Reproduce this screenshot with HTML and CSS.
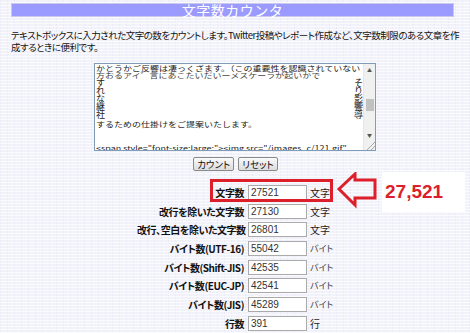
FILE: index.html
```html
<!DOCTYPE html>
<html lang="ja">
<head>
<meta charset="utf-8">
<title>文字数カウンタ</title>
<link rel="stylesheet" href="styles.css">
</head>
<body>
<div class="page">
  <div class="wrap">
    <h1 class="title">文字数カウンタ</h1>
    <p class="desc">テキストボックスに入力された文字の数をカウントします。Twitter投稿やレポート作成など、文字数制限のある文章を作<br>成するときに便利です。</p>
  </div>

  <div class="ta">
    <div class="ta-text">
      <div class="ta-line">かとうかご反響は凄っくざます。（この重要性を認識されていない</div>
      <div class="ta-line l2">方おるアイ゛言にあこたいだいーメスケーラが起いかで</div>
      <div class="ta-cols">
        <div class="vcol">すれな継社</div>
        <div class="vcol">そり影響導</div>
      </div>
      <div class="ta-line">するための仕掛けをご提案いたします。</div>
      <div class="ta-line last">&lt;span style="font-size:large;"&gt;&lt;img src="/images_c/121.gif"</div>
    </div>
    <div class="ta-scroll">
      <div class="sb-arrow">▲</div>
      <div class="sb-track"><div class="sb-thumb"></div></div>
      <div class="sb-arrow">▼</div>
      <div class="sb-grip"></div>
    </div>
  </div>

  <div class="buttons">
    <button class="btn">カウント</button>
    <button class="btn">リセット</button>
  </div>

  <div class="result">
    <div class="grid">
      <div class="lbl">文字数</div><div class="val">27521</div><div class="unit">文字</div>
      <div class="lbl">改行を除いた文字数</div><div class="val">27130</div><div class="unit">文字</div>
      <div class="lbl">改行、空白を除いた文字数</div><div class="val">26801</div><div class="unit">文字</div>
      <div class="lbl">バイト数(UTF-16)</div><div class="val">55042</div><div class="unit small">バイト</div>
      <div class="lbl">バイト数(Shift-JIS)</div><div class="val">42535</div><div class="unit small">バイト</div>
      <div class="lbl">バイト数(EUC-JP)</div><div class="val">42541</div><div class="unit small">バイト</div>
      <div class="lbl">バイト数(JIS)</div><div class="val">45289</div><div class="unit small">バイト</div>
      <div class="lbl">行数</div><div class="val">391</div><div class="unit">行</div>
    </div>
  </div>

  <div class="mark-box"></div>
  <svg class="mark-arrow" width="44" height="40" viewBox="0 0 44 40">
    <polygon points="3,17 19,2 19,8 39,8 39,26 19,26 19,33" fill="none" stroke="#dc1f2b" stroke-width="3" stroke-linejoin="miter"/>
  </svg>
  <div class="callout">27,521</div>
</div>
</body>
</html>
```

FILE: styles.css
```css
html, body {
  margin: 0;
  padding: 0;
}
body {
  width: 470px;
  height: 333px;
  overflow: hidden;
  background-color: #f2f2fb;
  background-image:
    repeating-linear-gradient(0deg, rgba(255,255,255,0.7) 0 1px, transparent 1px 3px),
    repeating-linear-gradient(90deg, rgba(230,230,245,0.5) 0 1px, transparent 1px 7px);
  font-family: "Noto Sans CJK JP", "Liberation Sans", sans-serif;
  color: #111;
}
.page {
  position: relative;
  padding-top: 3px;
}
.wrap {
  width: 443px;
  margin-left: 11px;
}
.title {
  margin: 0;
  height: 14px;
  background: #9a9aff;
  border: 1px solid #c9c9ee;
  box-sizing: border-box;
  color: #fff;
  font-size: 14px;
  font-weight: normal;
  line-height: 13px;
  text-align: center;
  letter-spacing: 0.5px;
}
.desc {
  margin: 12px 0 0 0;
  font-size: 9.5px;
  line-height: 12px;
  font-feature-settings: "palt";
  letter-spacing: -0.5px;
  color: #111;
  white-space: nowrap;
}
.ta {
  width: 282px;
  height: 88px;
  margin: 10px auto 0;
  box-sizing: border-box;
  border: 1px solid #7f9db9;
  background: #fff;
  display: flex;
}
.ta-text {
  flex: 1;
  overflow: hidden;
  padding: 1px 0 0 1px;
  font-family: "Noto Sans CJK JP", "DejaVu Sans Mono", monospace;
  font-size: 9px;
  color: #222;
}
.ta-line {
  white-space: nowrap;
  line-height: 7px;
  height: 7px;
  transform: scaleY(0.8);
  transform-origin: left top;
}
.l2 {
  color: #444;
}
.ta-cols {
  display: flex;
  justify-content: space-between;
  height: 42px;
  padding-right: 0;
}
.vcol {
  width: 9px;
  word-break: break-all;
  line-height: 8px;
  font-size: 9px;
}
.last {
  margin-top: 17px;
}
.ta-scroll {
  width: 11px;
  background: #f0f0f0;
  display: flex;
  flex-direction: column;
  border-left: 1px solid #e6e6e6;
}
.sb-arrow {
  height: 11px;
  font-size: 5px;
  line-height: 11px;
  text-align: center;
  color: #555;
}
.sb-track {
  flex: 1;
  padding-top: 24px;
}
.sb-thumb {
  width: 8px;
  height: 12px;
  margin: 0 auto;
  background: #c1c1c1;
}
.sb-grip {
  height: 10px;
  background: linear-gradient(135deg, transparent 60%, #aaa 60% 66%, transparent 66% 78%, #aaa 78% 84%, transparent 84%);
}
.buttons {
  display: flex;
  justify-content: center;
  gap: 4px;
  margin-top: 6px;
  padding-left: 1px;
}
.btn {
  height: 14px;
  padding: 0 3px;
  font-family: "Noto Sans CJK JP", sans-serif;
  font-size: 9.5px;
  line-height: 12px;
  color: #111;
  background: linear-gradient(#fafafa, #dcdcdc);
  border: 1px solid #8a8a8a;
  border-radius: 2px;
  font-feature-settings: "palt";
}
.result {
  padding-left: 137px;
  margin-top: 14px;
}
.grid {
  display: grid;
  grid-template-columns: 108px 59px 24px;
  grid-auto-rows: 15px;
  column-gap: 3px;
  row-gap: 3.7px;
  align-items: center;
}
.lbl {
  text-align: right;
  font-size: 10px;
  font-weight: bold;
  line-height: 15px;
  font-feature-settings: "palt";
  letter-spacing: -0.45px;
  white-space: nowrap;
  color: #111;
  padding-right: 1px;
}
.val {
  height: 15px;
  box-sizing: border-box;
  border: 1px solid #aaa;
  background: #fff;
  font-family: "Liberation Sans", sans-serif;
  font-size: 10px;
  line-height: 13px;
  padding-left: 2px;
  color: #333;
}
.unit {
  font-size: 10px;
  line-height: 15px;
  color: #222;
  white-space: nowrap;
}
.unit.small {
  font-size: 9px;
  color: #444;
  font-feature-settings: "palt";
}
.mark-box {
  position: absolute;
  left: 210px;
  top: 179px;
  width: 123px;
  height: 23px;
  box-sizing: border-box;
  border: 3px solid #dc1f2b;
}
.mark-arrow {
  position: absolute;
  left: 336px;
  top: 172px;
}
.callout {
  position: absolute;
  left: 382px;
  top: 172px;
  width: 83px;
  height: 40px;
  background: #fff;
  color: #dc1f2b;
  font-family: "Liberation Sans", sans-serif;
  font-weight: bold;
  font-size: 19px;
  line-height: 40px;
  padding-left: 3px;
  box-sizing: border-box;
}
```
